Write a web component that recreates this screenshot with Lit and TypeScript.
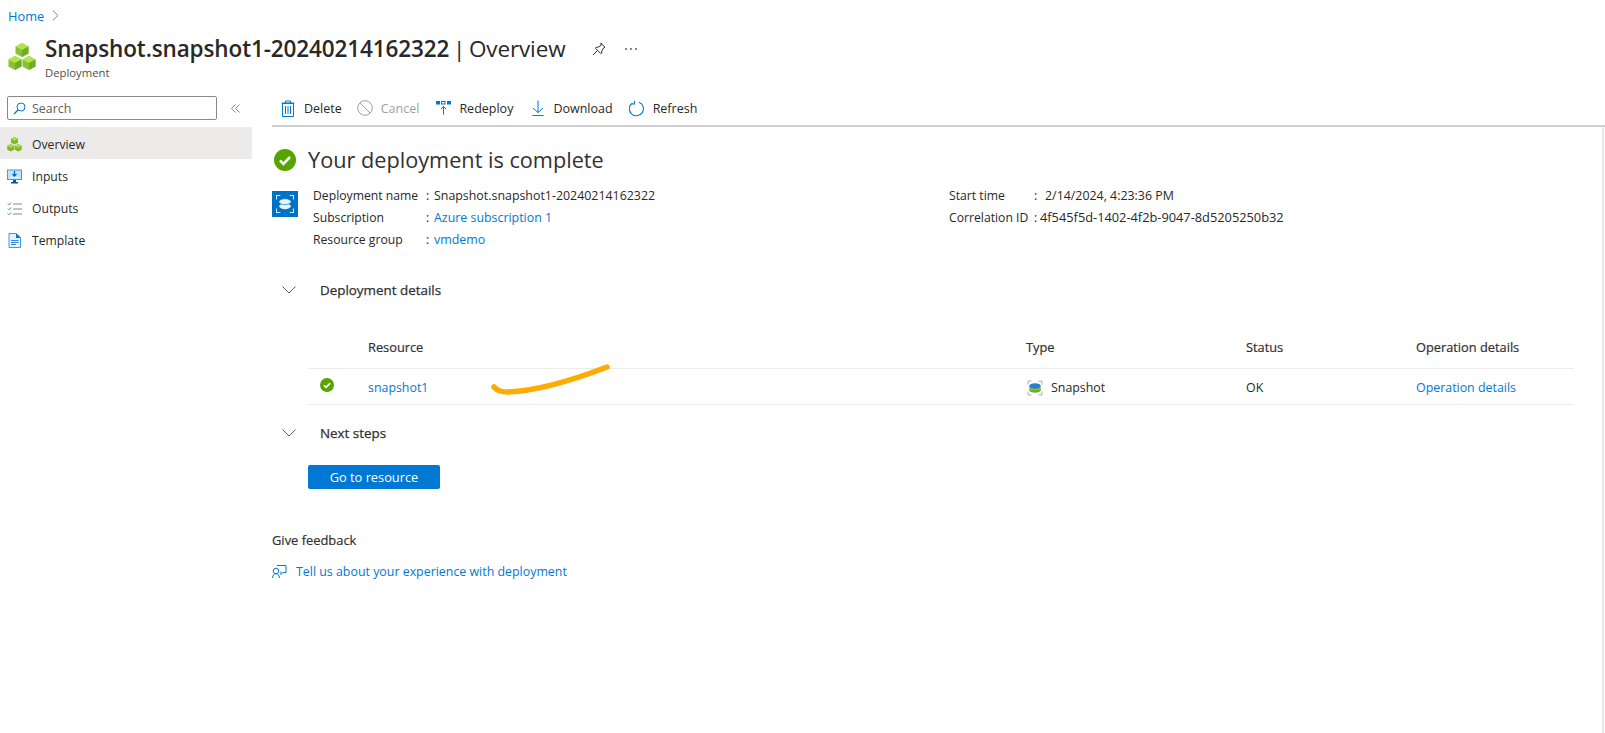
import { LitElement, html, css, svg } from "lit";
import { customElement } from "lit/decorators.js";

const cubes = (s: number) => html`<svg width=${s} height=${s} viewBox="0 0 28 28">
  <g>
    ${[[14,0],[7,13],[21,13]].map(([x,y]) => svg`
      <path d="M${x} ${y}l6.5 3.4v7.2L${x} ${y+14}l-6.5-3.4v-7.2z" fill="#86c232"/>
      <path d="M${x} ${y}l6.5 3.4L${x} ${y+7}l-6.5-3.6z" fill="#b5e34e"/>
      <path d="M${x} ${y+7}l6.5-3.6v7.2L${x} ${y+14}z" fill="#6fae22"/>`)}
  </g></svg>`;

const check = (s: number) => html`<svg width=${s} height=${s} viewBox="0 0 22 22">
  <circle cx="11" cy="11" r="11" fill="#57a300"/>
  <path d="M6 11.4l3.4 3.4L16 8" fill="none" stroke="#fff" stroke-width="2.6"/></svg>`;

@customElement("app-root")
export class AppRoot extends LitElement {
  static styles = css`
    :host { display: block; position: relative; width: 1605px; height: 733px; overflow: hidden; background: #fff; color: #292827;
      font-family: "Open Sans", "Noto Sans", sans-serif; font-size: 12.4px; }
    a { color: #0078d4; text-decoration: none; }
    svg { display: block; flex: none; }
    .crumb { display: flex; align-items: center; gap: 8px; padding: 7px 0 0 8px; font-size: 12.8px; height: 17px; }
    .head { display: flex; align-items: flex-start; padding: 8px 0 0 8px; height: 63px; box-sizing: border-box; }
    .logo { margin-top: 11px; margin-right: 9px; }
    .title-row { display: flex; align-items: center; height: 34px; }
    h1 { margin: 0; font-size: 22.5px; font-weight: 400; letter-spacing: -.12px; word-spacing: -2px; white-space: nowrap; line-height: 34px; }
    h1 b { font-weight: 600; }
    .pin { margin-left: 26px; }
    .more { margin-left: 19px; }
    .sub { font-size: 11.3px; color: #504e4c; line-height: 14px; }
    .body { display: flex; }
    .side { width: 252px; flex: none; }
    .search-row { display: flex; align-items: center; padding-top: 2px; height: 40px; padding-left: 7px; box-sizing: border-box; }
    .search { width: 210px; height: 24px; box-sizing: border-box; border: 1px solid #8a8886; border-radius: 2px; display: flex; align-items: center; gap: 6px; padding-left: 5px; color: #605e5c; }
    .collapse { margin-left: 14px; }
    .nav { display: flex; align-items: center; gap: 10px; height: 32px; box-sizing: border-box; padding: 2px 0 0 7px; font-size: 12.2px; }
    .nav.on { background: #edebe9; }
    .main { flex: 1; min-width: 0; padding-left: 20px; position: relative; }
    .toolbar { display: flex; align-items: center; height: 34px; padding: 4px 0 0 9px; border-bottom: 2px solid #d0d0d0; font-size: 12.5px; }
    .tb { display: flex; align-items: center; gap: 8px; margin-right: 17px; }
    .tb.first { margin-right: 15px; }
    .tb.m18 { margin-right: 18px; }
    .tb.m16 { margin-right: 16px; }
    .tb.off { color: #a19f9d; }
    .content { border-right: 2px solid #e8e8e8; height: 606px; box-sizing: border-box; margin-right: 1px; }
    .done { display: flex; align-items: center; gap: 12px; padding: 22px 0 0 2px; height: 22px; }
    .done h2 { margin: 0; font-size: 21.7px; font-weight: 400; white-space: nowrap; line-height: 24px; color: #323130; }
    .summary { display: flex; margin-top: 13px; height: 66px; }
    .tile { width: 26px; height: 26px; background: #0072c6; margin-top: 7px; margin-right: 15px; display: flex; align-items: center; justify-content: center; flex: none; }
    .kv { display: grid; grid-template-columns: 113px 8px 1fr; grid-auto-rows: 22px; align-items: center; white-space: nowrap; }
    .kv .k { font-size: 12.2px; }
    .left { width: 636px; flex: none; }
    .right { grid-template-columns: 85px 7px 1fr; }
    .pad { padding-left: 4px; }
    .wide { font-size: 12.8px; margin-left: -1px; }
    .sec { display: flex; align-items: center; height: 24px; font-size: 13.4px; color: #323130; -webkit-text-stroke: .25px #323130; }
    .chev { margin: 0 24px 0 10px; }
    .table { margin-left: 36px; margin-right: 28px; }
    .tr { display: grid; grid-template-columns: 60px 658px 220px 170px 1fr; align-items: center; }
    .th { height: 42px; margin-top: 24px; border-bottom: 1px solid #edebe9; font-size: 12.8px; color: #323130; -webkit-text-stroke: .2px #323130; }
    .td { height: 35px; border-bottom: 1px solid #edebe9; }
    .td > * { padding-top: 2px; }
    .st { padding-left: 12px; margin-top: -6px; }
    .type { display: flex; align-items: center; gap: 7px; }
    .btn { display: inline-flex; align-items: center; justify-content: center; width: 132px; height: 24px; margin: 20px 0 0 36px; background: #0078d4; color: #fff; border-radius: 2px; font-size: 12.8px; }
    .fb { margin-top: 43px; line-height: 16px; font-size: 12.9px; color: #323130; -webkit-text-stroke: .2px #323130; }
    .link { display: flex; align-items: center; gap: 9px; margin-top: 15px; }
    .ink { position: absolute; left: 490px; top: 360px; }
  `;

  render() {
    const chev = html`<svg class="chev" width="14" height="8" viewBox="0 0 14 8"><path d="M.5.500L7 7 13.500.500" fill="none" stroke="#605e5c"/></svg>`;
    return html`
      <div class="crumb"><a>Home</a>
        <svg width="7" height="11" viewBox="0 0 7 11"><path d="M1 .8l5 4.7-5 4.7" fill="none" stroke="#8a8886"/></svg></div>
      <div class="head">
        <div class="logo">${cubes(28)}</div>
        <div>
          <div class="title-row"><h1><b>Snapshot.snapshot1-20240214162322</b> | Overview</h1>
            <svg class="pin" width="14" height="14" viewBox="0 0 14 14"><path d="M1 13l4-4M8.800 1l4.200 4.200-1.300.6-2 3.200.1 2-1 .6L3.400 6.200l.8-1h2l3-2z" fill="none" stroke="#323130"/></svg>
            <svg class="more" width="12" height="2" viewBox="0 0 12 2"><g fill="#8a8886"><rect width="2" height="2"/><rect x="5" width="2" height="2"/><rect x="10" width="2" height="2"/></g></svg>
          </div>
          <div class="sub">Deployment</div>
        </div>
      </div>
      <div class="body">
        <div class="side">
          <div class="search-row">
            <div class="search">
              <svg width="13" height="13" viewBox="0 0 13 13"><circle cx="8" cy="5" r="4" fill="none" stroke="#0078d4"/><path d="M5 8l-4 4" stroke="#0078d4" stroke-width="1.200"/></svg>
              Search
            </div>
            <svg class="collapse" width="9" height="9" viewBox="0 0 9 9"><path d="M4.500 .5l-4 4 4 4M8.500 .5l-4 4 4 4" fill="none" stroke="#8a8886"/></svg>
          </div>
          <div class="nav on">
            <svg width="15" height="15" viewBox="0 0 28 28">${[[14,0],[7,13],[21,13]].map(([x,y]) => svg`<path d="M${x} ${y}l6.500 3.400v7.200L${x} ${y+14}l-6.500-3.400v-7.200z" fill="#7cbb28"/><path d="M${x} ${y}l6.500 3.400L${x} ${y+7}l-6.500-3.600z" fill="#aedd47"/>`)}</svg>
            Overview</div>
          <div class="nav">
            <svg width="15" height="15" viewBox="0 0 15 15"><rect x=".5" y="1" width="14" height="9.500" fill="#bfe3fa" stroke="#3f9be8"/><path d="M7.500 2v5M5.500 5l2 2.200 2-2.200" fill="none" stroke="#0a62b8" stroke-width="1.200"/><path d="M3 8.500h9" stroke="#fff"/><rect x="6" y="11" width="3" height="2" fill="#14518f"/><rect x="4" y="13" width="7" height="1.500" fill="#14518f"/></svg>
            Inputs</div>
          <div class="nav">
            <svg width="15" height="15" viewBox="0 0 15 15"><path d="M.8 2.500l1.300 1.300L4 1.500M.8 7.500l1.300 1.300L4 6.500M.8 12.500l1.300 1.300L4 11.500" fill="none" stroke="#2f8ae0"/><path d="M6 3h9M6 8h9M6 13h9" stroke="#8a8886"/></svg>
            Outputs</div>
          <div class="nav">
            <svg width="15" height="15" viewBox="0 0 15 15"><path d="M2 .5h7.500L13.500 4.500v10H2z" fill="#e3f2fd" stroke="#3f9be8"/><path d="M9 .5v4.500h4.500z" fill="#0a6fc9"/><path d="M4 7.500h7.500M4 9.500h7.500M4 11.500h5" stroke="#2f8ae0"/></svg>
            Template</div>
        </div>
        <div class="main">
          <div class="toolbar">
            <div class="tb first"><svg width="15" height="17" viewBox="0 0 15 17"><path d="M1.500 3.500h11v13h-11zM.5 3h13M4.500 3V1h5v2M4.500 6v8M7 6v8M9.500 6v8" fill="none" stroke="#0078d4"/></svg>Delete</div>
            <div class="tb off"><svg width="16" height="16" viewBox="0 0 16 16"><circle cx="8" cy="8" r="7.300" fill="none" stroke="#a19f9d"/><path d="M3 3l10 10" stroke="#a19f9d"/></svg>Cancel</div>
            <div class="tb m18"><svg width="15" height="15" viewBox="0 0 15 15"><g fill="#0078d4"><rect width="4" height="3.500"/><rect x="5.500" y=".5" width="3.500" height="2.500" fill="none" stroke="#0078d4"/><rect x="11" width="4" height="3.500"/></g><path d="M7.500 13.500v-8M5 8l2.500-2.500L10 8" fill="none" stroke="#0078d4"/></svg>Redeploy</div>
            <div class="tb m16"><svg width="14" height="16" viewBox="0 0 14 16"><path d="M7 .5v12M2 8l5 4.500L12 8M1.500 15.500h11" fill="none" stroke="#0078d4"/></svg>Download</div>
            <div class="tb"><svg width="16" height="17" viewBox="0 0 16 17"><path d="M10 2.300A7 7 0 1 1 3.500 3M5.500 .8V4H2" fill="none" stroke="#0078d4" stroke-width="1.100"/></svg>Refresh</div>
          </div>
          <div class="content">
            <div class="done">${check(22)}<h2>Your deployment is complete</h2></div>
            <div class="summary">
              <div class="tile"><svg width="20" height="20" viewBox="0 0 26 26">
                <path d="M2 7V2h5M19 2h5v5M24 19v5h-5M7 24H2v-5" fill="none" stroke="#cfe6f8" stroke-width="1.400"/>
                <ellipse cx="13" cy="16" rx="7.500" ry="3.800" fill="#e8f3fb"/>
                <ellipse cx="13" cy="10" rx="8" ry="3.800" fill="#e8f3fb" stroke="#0072c6" stroke-width=".8"/></svg></div>
              <div class="left kv">
                <span class="k">Deployment name</span><span>:</span><span>Snapshot.snapshot1-20240214162322</span>
                <span class="k">Subscription</span><span>:</span><span><a>Azure subscription 1</a></span>
                <span class="k">Resource group</span><span>:</span><span><a>vmdemo</a></span>
              </div>
              <div class="kv right">
                <span class="k">Start time</span><span>:</span><span class="pad">2/14/2024, 4:23:36 PM</span>
                <span class="k">Correlation ID</span><span>:</span><span class="wide">4f545f5d-1402-4f2b-9047-8d5205250b32</span>
              </div>
            </div>
            <div class="sec" style="margin-top:28px">${chev}Deployment details</div>
            <div class="table">
              <div class="tr th"><span></span><span>Resource</span><span>Type</span><span>Status</span><span>Operation details</span></div>
              <div class="tr td">
                <div class="st">${check(14)}</div>
                <a>snapshot1</a>
                <div class="type"><svg width="18" height="18" viewBox="0 0 26 26">
                  <path d="M3 8V3h5M18 3h5v5M23 18v5h-5M8 23H3v-5" fill="none" stroke="#8a8886"/>
                  <ellipse cx="13" cy="16" rx="8.500" ry="4" fill="#6fae22"/><rect x="4.500" y="13" width="17" height="3" fill="#86c232"/><ellipse cx="13" cy="13" rx="8.500" ry="3" fill="#86c232"/>
                  <ellipse cx="13" cy="10" rx="8.500" ry="4" fill="#2a7fd4"/></svg>Snapshot</div>
                <span>OK</span><a>Operation details</a>
              </div>
            </div>
            <div class="sec" style="margin-top:16px">${chev}Next steps</div>
            <div class="btn">Go to resource</div>
            <div class="fb">Give feedback</div>
            <div class="link"><svg width="15" height="15" viewBox="0 0 15 15"><path d="M5 1.500h9v7h-3M11 8.500l-2 2v-3" fill="none" stroke="#0078d4"/><circle cx="4" cy="7" r="2.800" fill="none" stroke="#0078d4"/><path d="M.5 14c.3-3 1.500-4.300 3.500-4.300s3 1.300 3.500 4.300" fill="none" stroke="#0078d4"/></svg><a>Tell us about your experience with deployment</a></div>
          </div>
        </div>
      </div>
      <svg class="ink" width="125" height="40" viewBox="490 360 125 40"><path d="M494 387c4 4 7 5 14 5 26-1 60-10 99-25" fill="none" stroke="#ffab00" stroke-width="5.500" stroke-linecap="round"/></svg>
    `;
  }
}
